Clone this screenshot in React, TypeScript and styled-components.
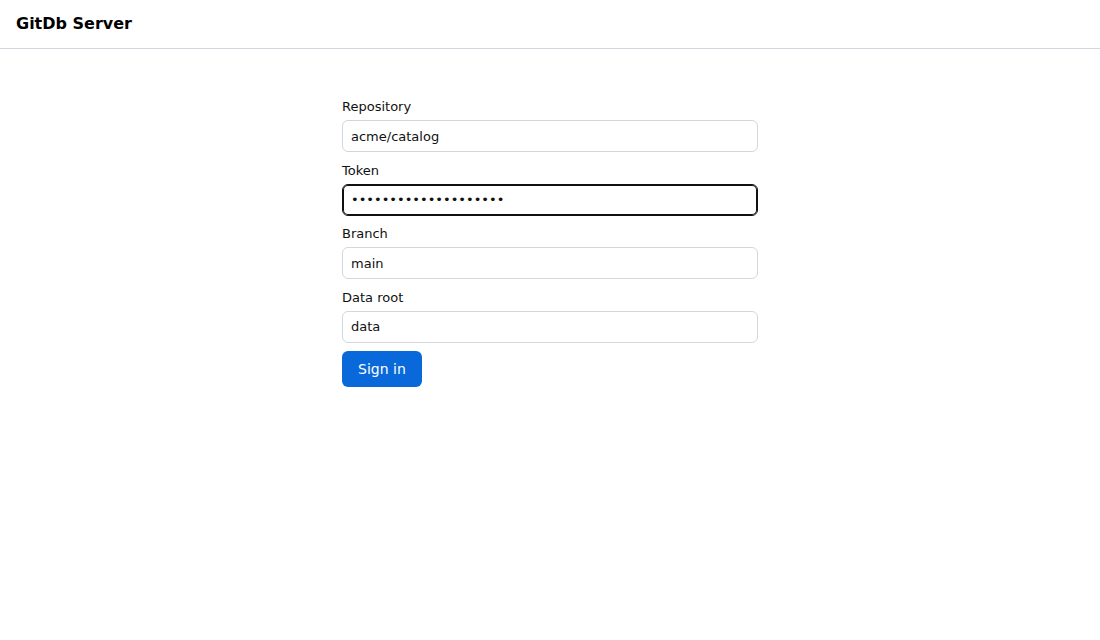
import React from "react";
import styled, { createGlobalStyle } from "styled-components";

const Global = createGlobalStyle`
  * { box-sizing: border-box; }
  html, body { margin: 0; padding: 0; background: #ffffff; }
  body { font-family: "DejaVu Sans", "Noto Sans", sans-serif; color: #1f2328; }
`;

const Header = styled.header`
  height: 49px;
  display: flex;
  align-items: center;
  padding: 0 16px 2px;
  border-bottom: 1px solid #d0d7de;
`;

const Title = styled.h1`
  margin: 0;
  font-size: 16px;
  font-weight: 700;
  color: #000;
`;

const Main = styled.main`
  display: flex;
  justify-content: center;
  padding-top: 49px;
`;

const Form = styled.form`
  width: 416px;
  display: flex;
  flex-direction: column;
`;

const Field = styled.div`
  display: flex;
  flex-direction: column;
  margin-bottom: 9.5px;
`;

const Label = styled.label`
  font-size: 13px;
  line-height: 17px;
  margin-bottom: 5px;
  color: #111;
`;

const Input = styled.input<{ $focused?: boolean }>`
  height: 32px;
  width: 100%;
  padding: 0 8px;
  font-family: inherit;
  font-size: 13px;
  color: #111;
  background: #fff;
  border: 1px solid ${(p) => (p.$focused ? "#111" : "#d0d7de")};
  box-shadow: ${(p) => (p.$focused ? "inset 0 0 0 1px #111" : "none")};
  border-radius: 6px;
  outline: none;
`;

const Button = styled.button`
  align-self: flex-start;
  height: 36px;
  padding: 0 16px;
  margin-top: -1.5px;
  font-family: inherit;
  font-size: 14px;
  color: #fff;
  background: #0969da;
  border: none;
  border-radius: 6px;
  cursor: pointer;
`;

const fields = [
  { label: "Repository", value: "acme/catalog", type: "text" },
  { label: "Token", value: "abcdefghijklmnopqrst", type: "password", focused: true },
  { label: "Branch", value: "main", type: "text" },
  { label: "Data root", value: "data", type: "text" },
];

export default function App() {
  return (
    <>
      <Global />
      <Header>
        <Title>GitDb Server</Title>
      </Header>
      <Main>
        <Form onSubmit={(e) => e.preventDefault()}>
          {fields.map((f) => (
            <Field key={f.label}>
              <Label>{f.label}</Label>
              <Input type={f.type} defaultValue={f.value} $focused={f.focused} readOnly />
            </Field>
          ))}
          <Button type="submit">Sign in</Button>
        </Form>
      </Main>
    </>
  );
}
